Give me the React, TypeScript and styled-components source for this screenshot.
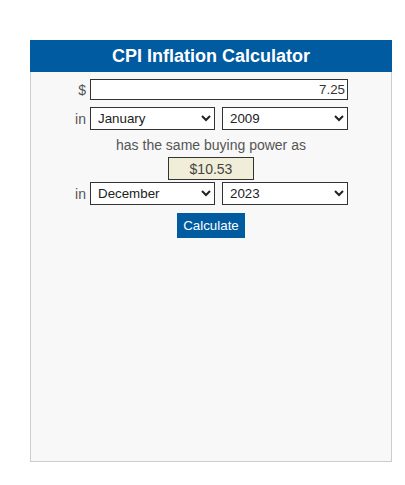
import React from 'react';
import styled, { createGlobalStyle } from 'styled-components';

const GlobalStyle = createGlobalStyle`
  body {
    margin: 0;
    background: #ffffff;
    font-family: "Liberation Sans", Arial, sans-serif;
  }
`;

const months = [
  'January', 'February', 'March', 'April', 'May', 'June',
  'July', 'August', 'September', 'October', 'November', 'December',
];
const years = Array.from({ length: 2024 - 1913 }, (_, i) => String(1913 + i));

const App = () => {
  return (
    <React.Fragment>
      <GlobalStyle />
      <Page>
        <Panel>
          <Header>CPI Inflation Calculator</Header>
          <Body>
            <FieldRow>
              <Label>$</Label>
              <AmountInput defaultValue="7.25" />
            </FieldRow>
            <FieldRow>
              <Label>in</Label>
              <Pair>
                <Select defaultValue="January" $w={125}>
                  {months.map((m) => (
                    <option key={m}>{m}</option>
                  ))}
                </Select>
                <Select defaultValue="2009" $w={126}>
                  {years.map((y) => (
                    <option key={y}>{y}</option>
                  ))}
                </Select>
              </Pair>
            </FieldRow>
            <Caption>has the same buying power as</Caption>
            <Result>$10.53</Result>
            <FieldRow $tight>
              <Label>in</Label>
              <Pair>
                <Select defaultValue="December" $w={125}>
                  {months.map((m) => (
                    <option key={m}>{m}</option>
                  ))}
                </Select>
                <Select defaultValue="2023" $w={126}>
                  {years.map((y) => (
                    <option key={y}>{y}</option>
                  ))}
                </Select>
              </Pair>
            </FieldRow>
            <Button>Calculate</Button>
          </Body>
        </Panel>
      </Page>
    </React.Fragment>
  );
};

const Page = styled.div`
  padding: 40px 13px 23px 30px;
`;

const Panel = styled.div`
  width: 360px;
  height: 421px;
  background-color: #f8f8f8;
  border: 1px solid #cccccc;
  border-top: none;
  display: flex;
  flex-direction: column;
`;

const Header = styled.div`
  height: 32px;
  margin: 0 -1px;
  background-color: #005ba1;
  color: #ffffff;
  font-size: 18px;
  font-weight: bold;
  display: flex;
  align-items: center;
  justify-content: center;
`;

const Body = styled.div`
  display: flex;
  flex-direction: column;
  align-items: center;
  padding-top: 7px;
  color: #444444;
  font-size: 14px;
`;

const FieldRow = styled.div<{ $tight?: boolean }>`
  display: grid;
  grid-template-columns: 15px 258px;
  column-gap: 4px;
  align-items: center;
  margin-left: -3px;
  margin-bottom: ${({ $tight }) => ($tight ? '8px' : '7px')};
`;

const Label = styled.span`
  color: #555555;
  font-size: 14px;
  text-align: right;
`;

const Pair = styled.div`
  display: flex;
  justify-content: space-between;
`;

const AmountInput = styled.input`
  box-sizing: border-box;
  width: 258px;
  height: 21px;
  border: 1px solid #333333;
  background: #ffffff;
  text-align: right;
  font-family: "Liberation Sans", Arial, sans-serif;
  font-size: 13.333px;
  color: #333333;
  padding: 0 2px;
  outline: none;
`;

const Select = styled.select<{ $w: number }>`
  box-sizing: border-box;
  width: ${({ $w }) => $w}px;
  height: 23px;
  border: 1px solid #333333;
  border-radius: 0;
  background: #ffffff;
  font-family: "Liberation Sans", Arial, sans-serif;
  font-size: 13.333px;
  color: #222222;
  padding: 0 3px;
`;

const Caption = styled.div`
  color: #555555;
  font-size: 14px;
  line-height: 16px;
  margin-bottom: 4px;
`;

const Result = styled.div`
  box-sizing: border-box;
  width: 86px;
  height: 23px;
  border: 1px solid #333333;
  background-color: #f0eed8;
  color: #444444;
  font-size: 14px;
  display: flex;
  align-items: center;
  justify-content: center;
  margin-bottom: 2px;
`;

const Button = styled.button`
  height: 25px;
  padding: 0 6px;
  border: none;
  background-color: #005ba1;
  color: #ffffff;
  font-family: "Liberation Sans", Arial, sans-serif;
  font-size: 13.333px;
  cursor: pointer;
`;

export default App;
